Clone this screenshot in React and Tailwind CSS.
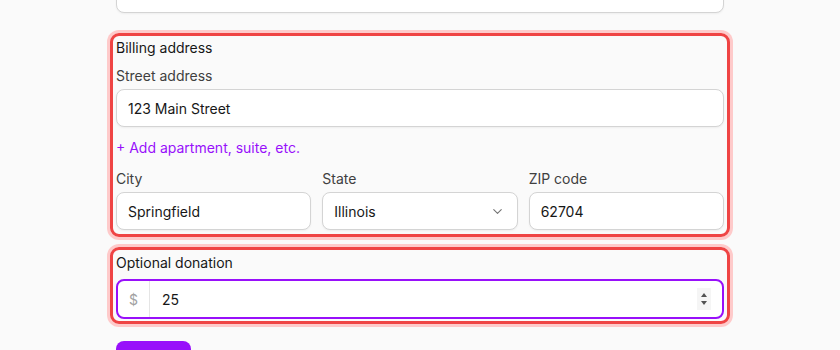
import { ChevronDown } from 'lucide-react';

function Field({ label, value, children }) {
  return (
    <div className="flex flex-col">
      <span className="text-[14px] leading-5 text-neutral-700">{label}</span>
      <div className="mt-[3px] flex h-[38px] items-center justify-between rounded-lg border border-neutral-300 bg-white pr-3 pl-[11px] text-[14px] text-neutral-900 shadow-xs">
        <span>{value}</span>
        {children}
      </div>
    </div>
  );
}

export default function App() {
  return (
    <div className="min-h-[350px] bg-[#fafafa] font-['Inter',sans-serif] text-neutral-900">
      <div className="mx-auto w-[608px]">
        {/* previous field, cut off at the top */}
        <div className="-mt-[25px] h-[38px] rounded-lg border border-neutral-300 bg-white shadow-xs" />

        {/* Billing address */}
        <div className="-mx-[6px] mt-[20px] rounded-[9px] border-[3px] border-[#ef4444] px-[3px] pt-[2px] pb-[4px] ring-[3px] ring-[#fecaca]">
          <div className="text-[14px] leading-5 font-normal">Billing address</div>
          <div className="mt-[8px]">
            <Field label="Street address" value="123 Main Street" />
          </div>
          <div className="mt-[11px] text-[14px] leading-5 text-purple-600">
            + Add apartment, suite, etc.
          </div>
          <div className="mt-[11px] grid grid-cols-3 gap-[11px]">
            <Field label="City" value="Springfield" />
            <Field label="State" value="Illinois">
              <ChevronDown size={15} strokeWidth={1.75} className="text-neutral-500" />
            </Field>
            <Field label="ZIP code" value="62704" />
          </div>
        </div>

        {/* Optional donation */}
        <div className="-mx-[6px] mt-[10px] rounded-[9px] border-[3px] border-[#ef4444] px-[3px] pt-[3px] pb-[2px] ring-[3px] ring-[#fecaca]">
          <div className="text-[14px] leading-5 font-normal">Optional donation</div>
          <div className="mt-[6px] flex h-[40px] items-stretch rounded-lg border-2 border-purple-600 bg-white text-[14px]">
            <span className="flex w-[32px] items-center justify-center border-r border-neutral-200 text-neutral-400">$</span>
            <span className="flex flex-1 items-center pl-3">25</span>
            <span className="my-auto mr-[11px] flex h-[22px] w-[14px] flex-col items-center justify-center gap-[4px] bg-neutral-100">
              <span className="h-0 w-0 border-x-[3.5px] border-b-[4px] border-x-transparent border-b-neutral-600" />
              <span className="h-0 w-0 border-x-[3.5px] border-t-[4px] border-x-transparent border-t-neutral-600" />
            </span>
          </div>
        </div>

        <button className="mt-[17px] h-[44px] w-[75px] rounded-lg bg-purple-600 pt-[8px] text-[14px] font-medium text-white">
          Save
        </button>
      </div>
    </div>
  );
}
